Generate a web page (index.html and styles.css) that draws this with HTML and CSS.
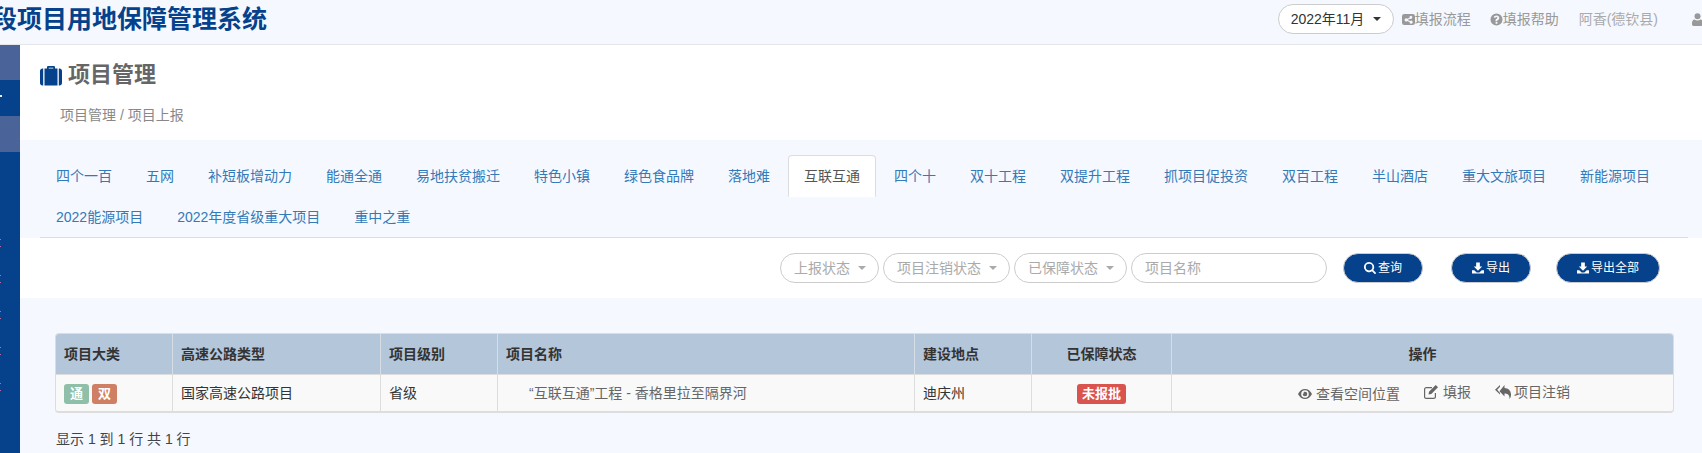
FILE: index.html
```html
<!DOCTYPE html>
<html lang="zh-CN">
<head>
<meta charset="utf-8">
<title>项目管理</title>
<link rel="stylesheet" href="styles.css">
</head>
<body>
<svg class="defs" width="0" height="0" aria-hidden="true">
  <symbol id="i-case" viewBox="0 0 22 21"><path d="M7 3.5V2.2C7 1.5 7.6 1 8.3 1h5.4c.7 0 1.3.5 1.3 1.2v1.3h-1.7V2.8H8.7v.7zM4.5 3.5h13v17h-13zM0 6c0-1.4 1.1-2.5 2.5-2.5H3.2v17H2.5C1.1 20.500 0 19.400 0 18zM18.800 3.500h.7C20.900 3.500 22 4.600 22 6v12c0 1.400-1.100 2.500-2.500 2.500h-.7z"/></symbol>
  <symbol id="i-share" viewBox="0 0 14 14"><path fill-rule="evenodd" d="M2.500 1h9A2.500 2.500 0 0 1 14 3.500v7a2.500 2.500 0 0 1-2.500 2.500h-9A2.500 2.500 0 0 1 0 10.500v-7A2.500 2.500 0 0 1 2.500 1zM9.800 3a1.700 1.700 0 0 0-1.650 2.100L5.700 6.300a1.700 1.700 0 1 0 0 2.300l2.450 1.200a1.700 1.700 0 1 0 .55-1.100L6.300 7.500v-.1l2.400-1.200A1.700 1.700 0 1 0 9.800 3z"/></symbol>
  <symbol id="i-help" viewBox="0 0 14 14"><path fill-rule="evenodd" d="M7 .5a6.500 6.500 0 1 1 0 13 6.500 6.500 0 0 1 0-13zM6 9.800v1.800h2V9.800zM7 2.700c-1.500 0-2.600.8-3 1.900l1.500.7c.3-.6.700-.9 1.400-.9.700 0 1.100.3 1.100.8 0 .5-.4.800-.9 1.100-.8.500-1.200 1-1.200 2V9h1.900v-.4c0-.5.2-.7.700-1 .9-.5 1.500-1.200 1.500-2.200 0-1.600-1.300-2.700-3-2.700z"/></symbol>
  <symbol id="i-user" viewBox="0 0 11 13"><circle cx="5.500" cy="3.300" r="3"/><path d="M2.500 6.400c.8.600 1.900 1 3 1s2.200-.4 3-1c1.600.2 2.500 1.600 2.500 3.700v1.200c0 1-.7 1.700-1.700 1.700H1.700C.7 13 0 12.300 0 11.300v-1.200c0-2.100.9-3.500 2.500-3.700z"/></symbol>
  <symbol id="i-search" viewBox="0 0 13 13"><path fill-rule="evenodd" d="M5.500 0a5.500 5.500 0 0 1 4.500 8.650l2.650 2.650a.95.95 0 0 1-1.350 1.350L8.650 10A5.500 5.500 0 1 1 5.500 0zm0 1.900a3.600 3.600 0 1 0 0 7.200 3.600 3.600 0 0 0 0-7.200z"/></symbol>
  <symbol id="i-down" viewBox="0 0 13 12"><path d="M4.500 0h4v4.500H11L6.500 9 2 4.500h2.500zM0 8.500h2.500L5 11h3l2.500-2.500H13V12H0z"/></symbol>
  <symbol id="i-eye" viewBox="0 0 14 10"><path fill-rule="evenodd" d="M7 0c3 0 5.500 1.900 7 5-1.500 3.100-4 5-7 5S1.500 8.100 0 5c1.500-3.100 4-5 7-5zm0 1.200A3.800 3.800 0 1 0 7 8.800 3.800 3.800 0 0 0 7 1.200zM7 2.700A2.300 2.300 0 1 1 4.700 5c0-.4.500-.3.800-.6.400-.4 0-.9.400-1.300.3-.3.700-.4 1.100-.4z"/></symbol>
  <symbol id="i-edit" viewBox="0 0 14 14"><path d="M2.300 2H8v1.200H2.300c-.6 0-1.100.5-1.100 1.100v7.400c0 .6.500 1.100 1.100 1.100h7.400c.6 0 1.100-.5 1.100-1.100V8H12v3.700c0 1.300-1 2.300-2.300 2.300H2.300C1 14 0 13 0 11.700V4.300C0 3 1 2 2.300 2zM11.700 0 14 2.300 7.300 9 4.500 9.500 5 6.700z"/></symbol>
  <symbol id="i-reply" viewBox="0 0 16 14"><path d="M5 0v1.700L2.200 4.800 5 7.900v1.700L0 4.800zM9.500 0v3C13 3.200 16 5.400 16 9.700c0 1.800-.7 3.200-1.500 4.300.3-3.400-1.200-5.300-5-5.400v3L4.500 6.200z"/></symbol>
</svg>

<header class="topbar">
  <h1 class="system-title">段项目用地保障管理系统</h1>
  <div class="top-tools">
    <div class="month-select"><span>2022年11月</span><i class="caret caret-dark"></i></div>
    <a class="top-link link-flow"><svg class="ico-14"><use href="#i-share"/></svg>填报流程</a>
    <a class="top-link link-help"><svg class="ico-14"><use href="#i-help"/></svg>填报帮助</a>
    <a class="top-link link-user">阿香(德钦县)</a>
    <svg class="ico-user"><use href="#i-user"/></svg>
  </div>
</header>

<div class="shell">
  <nav class="sidebar" aria-label="菜单">
    <div class="side-item side-light side-first"></div>
    <div class="side-item side-dark"><i class="side-tick"></i></div>
    <div class="side-item side-light"></div>
    <div class="side-rest">
      <i class="side-dots"></i><i class="side-dots"></i><i class="side-dots"></i><i class="side-dots"></i><i class="side-dots"></i>
    </div>
  </nav>

  <main class="content">
    <section class="page-head">
      <h2 class="page-title"><svg class="ico-case"><use href="#i-case"/></svg>项目管理</h2>
      <p class="crumbs">项目管理 / 项目上报</p>
    </section>

    <section class="tabs-wrap">
      <ul class="tabs">
        <li>四个一百</li><li>五网</li><li>补短板增动力</li><li>能通全通</li><li>易地扶贫搬迁</li><li>特色小镇</li><li>绿色食品牌</li><li>落地难</li><li class="active">互联互通</li><li>四个十</li><li>双十工程</li><li>双提升工程</li><li>抓项目促投资</li><li>双百工程</li><li>半山酒店</li><li>重大文旅项目</li><li>新能源项目</li><li>2022能源项目</li><li>2022年度省级重大项目</li><li>重中之重</li>
      </ul>
    </section>

    <section class="toolbar">
      <div class="pill pill-a">上报状态<i class="caret"></i></div>
      <div class="pill pill-b">项目注销状态<i class="caret"></i></div>
      <div class="pill pill-c">已保障状态<i class="caret"></i></div>
      <div class="pill pill-input">项目名称</div>
      <button class="btn btn-query"><svg class="ico-btn"><use href="#i-search"/></svg>查询</button>
      <button class="btn btn-export"><svg class="ico-btn"><use href="#i-down"/></svg>导出</button>
      <button class="btn btn-all"><svg class="ico-btn"><use href="#i-down"/></svg>导出全部</button>
    </section>

    <section class="table-wrap">
      <table class="data">
        <colgroup><col class="c1"><col class="c2"><col class="c3"><col class="c4"><col class="c5"><col class="c6"><col class="c7"></colgroup>
        <thead>
          <tr><th>项目大类</th><th>高速公路类型</th><th>项目级别</th><th>项目名称</th><th>建设地点</th><th class="center">已保障状态</th><th class="center">操作</th></tr>
        </thead>
        <tbody>
          <tr>
            <td><span class="tag tag-green">通</span><span class="tag tag-orange">双</span></td>
            <td>国家高速公路项目</td>
            <td>省级</td>
            <td class="name">“互联互通”工程 - 香格里拉至隔界河</td>
            <td>迪庆州</td>
            <td class="center"><span class="status">未报批</span></td>
            <td class="center ops">
              <a><svg class="ico-eye"><use href="#i-eye"/></svg>查看空间位置</a>
              <a><svg class="ico-edit"><use href="#i-edit"/></svg>填报</a>
              <a><svg class="ico-reply"><use href="#i-reply"/></svg>项目注销</a>
            </td>
          </tr>
        </tbody>
      </table>
      <p class="pager">显示 1 到 1 行 共 1 行</p>
    </section>
  </main>
</div>
</body>
</html>
```

FILE: styles.css
```css
* { box-sizing: border-box; }
html, body { margin: 0; padding: 0; height: 100%; }
body {
  width: 1702px;
  height: 453px;
  overflow: hidden;
  background: #f5f8ff;
  color: #333;
  font-family: "Liberation Sans", "Noto Sans CJK SC", sans-serif;
  font-size: 14px;
  line-height: 20px;
}
.defs { position: absolute; }
svg { fill: currentColor; flex: none; }

.topbar {
  height: 45px;
  display: flex;
  align-items: flex-start;
  justify-content: space-between;
  background: #f5f8ff;
  border-bottom: 1px solid #e4e6ea;
}
.system-title {
  margin: 4px 0 0 -8px;
  font-size: 25px;
  line-height: 30px;
  font-weight: 700;
  color: #05428b;
  white-space: nowrap;
}
.top-tools {
  display: flex;
  align-items: center;
  height: 30px;
  margin: 4px -1px 0 0;
  color: #999;
}
.month-select {
  width: 116px;
  height: 30px;
  display: flex;
  align-items: center;
  justify-content: space-between;
  padding: 0 12px 0 12px;
  background: #fff;
  border: 1px solid #ccc;
  border-radius: 15px;
  color: #333;
}
.caret {
  width: 0;
  height: 0;
  border-left: 4px solid transparent;
  border-right: 4px solid transparent;
  border-top: 4px solid #aaa;
}
.caret-dark { border-top-color: #333; }
.top-link { display: flex; align-items: center; white-space: nowrap; }
.link-flow { margin-left: 8px; color: #999; }
.link-help { margin-left: 19px; color: #999; }
.link-user { margin-left: 20px; color: #aaa; }
.ico-14 { width: 13px; height: 13px; }
.ico-user { width: 11px; height: 13px; margin-left: 34px; color: #999; }

.shell { display: flex; height: 408px; }
.sidebar {
  width: 20px;
  flex: none;
  background: #05428b;
  display: flex;
  flex-direction: column;
}
.side-item { height: 36px; flex: none; display: flex; align-items: center; }
.side-first { height: 35px; }
.side-light { background: #4a6398; }
.side-dark { background: #05428b; }
.side-tick { width: 2px; height: 2px; margin-bottom: 4px; background: #e8eef6; }
.side-rest {
  flex: 1;
  display: flex;
  flex-direction: column;
  gap: 28px;
  padding-top: 87px;
}
.side-dots {
  display: block;
  width: 1px;
  height: 8px;
  border-top: 1px solid #b06f9c;
  border-bottom: 1px solid #b06f9c;
}

.content { flex: 1; min-width: 0; }
.page-head { height: 95px; background: #fff; padding: 17px 0 0 20px; }
.page-title {
  display: flex;
  align-items: center;
  margin: 0;
  font-size: 22px;
  line-height: 26px;
  font-weight: 700;
  color: #666;
}
.ico-case { width: 22px; height: 21px; margin-right: 6px; color: #05428b; }
.crumbs { margin: 17px 0 0 20px; color: #888; }

.tabs-wrap { height: 98px; padding: 15px 14px 0 20px; }
.tabs {
  display: flex;
  flex-wrap: wrap;
  list-style: none;
  margin: 0;
  padding: 0;
  border-bottom: 1px solid #ddd;
  height: 83px;
}
.tabs li {
  height: 42px;
  margin: 0 2px -1px 0;
  padding: 10px 15px;
  border: 1px solid transparent;
  border-radius: 4px 4px 0 0;
  color: #337ab7;
  white-space: nowrap;
}
.tabs li.active {
  background: #fff;
  border-color: #ddd #ddd transparent;
  color: #555;
}

.toolbar {
  height: 60px;
  background: #fff;
  display: flex;
  align-items: flex-start;
  padding: 15px 0 0 760px;
}
.pill {
  height: 30px;
  display: flex;
  align-items: center;
  justify-content: space-between;
  padding: 0 12px 0 13px;
  border: 1px solid #ccc;
  border-radius: 15px;
  background: #fff;
  color: #aaa;
  white-space: nowrap;
}
.pill-a { width: 99px; }
.pill-b { width: 127px; margin-left: 4px; }
.pill-c { width: 113px; margin-left: 4px; }
.pill-input { width: 196px; margin-left: 4px; }
.btn {
  height: 30px;
  display: flex;
  align-items: center;
  justify-content: center;
  padding: 0;
  border: 1px solid #ccc;
  border-radius: 15px;
  background: #05428b;
  color: #fff;
  font: inherit;
  font-size: 12px;
}
.btn-query { width: 80px; margin-left: 16px; }
.btn-export { width: 80px; margin-left: 28px; }
.btn-all { width: 104px; margin-left: 25px; }
.ico-btn { width: 12px; height: 12px; margin-right: 2px; }

.table-wrap { padding: 35px 30px 0 35px; }
.data {
  width: 1617px;
  table-layout: fixed;
  border-collapse: separate;
  border-spacing: 0;
  background: #f9f9f9;
  border: 1px solid #ddd;
  border-bottom-width: 2px;
  border-radius: 4px;
  overflow: hidden;
}
.c1 { width: 116px; }
.c2 { width: 208px; }
.c3 { width: 117px; }
.c4 { width: 417px; }
.c5 { width: 117px; }
.c6 { width: 140px; }
.c7 { width: 502px; }
.data th {
  height: 41px;
  padding: 0 8px;
  background: #b3c6da;
  color: #333;
  font-weight: 700;
  text-align: left;
  border-left: 1px solid #d6dde6;
  border-bottom: 1px solid #ddd;
}
.data td {
  height: 36px;
  padding: 0 8px;
  border-left: 1px solid #ddd;
  color: #333;
}
.data th:first-child, .data td:first-child { border-left: 0; }
.data th.center, .data td.center { text-align: center; }
.data .name { padding-left: 31px; color: #666; }
.tag {
  display: inline-block;
  width: 25px;
  height: 20px;
  margin-right: 3px;
  border-radius: 3px;
  color: #fff;
  font-weight: 700;
  font-size: 13px;
  line-height: 20px;
  text-align: center;
  vertical-align: middle;
}
.tag-green { background: #8fbfa8; }
.tag-orange { background: #cf7f63; }
.status {
  display: inline-block;
  width: 49px;
  height: 20px;
  border-radius: 3px;
  background: #d9534f;
  color: #fff;
  font-weight: 700;
  font-size: 13px;
  line-height: 20px;
  vertical-align: middle;
}
.ops { color: #666; }
.data td.ops { padding-left: 31px; }
.ops a { display: inline-flex; align-items: center; color: #666; margin: 0 10px; }
.ico-eye { width: 14px; height: 10px; margin-right: 4px; }
.ico-edit { width: 14px; height: 14px; margin-right: 5px; }
.ico-reply { width: 16px; height: 14px; margin-right: 3px; }
.pager { margin: 16px 0 0 1px; color: #444; }
```
